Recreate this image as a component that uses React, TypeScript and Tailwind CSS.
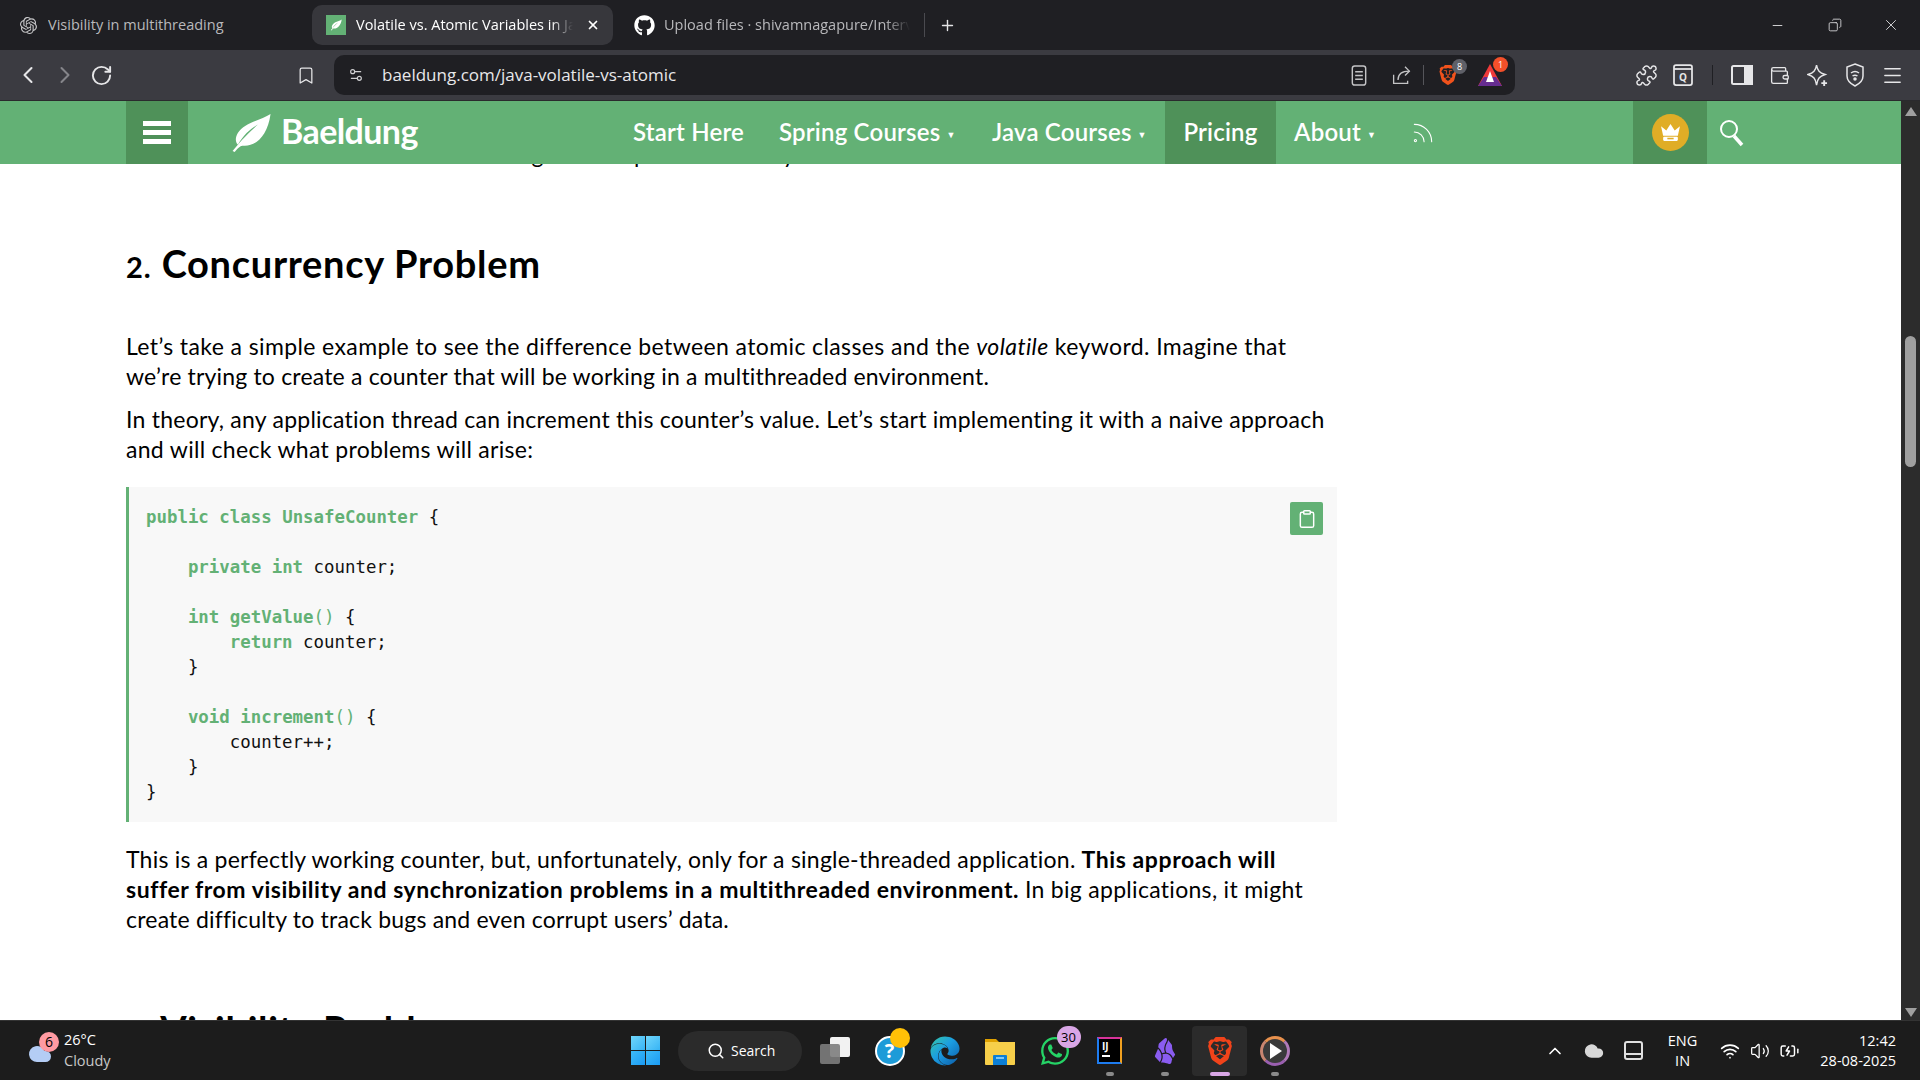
import type { ReactNode } from 'react'
import {
  ChevronLeft,
  ChevronRight,
  RotateCw,
  Bookmark,
  Settings2,
  X,
  Plus,
  Minus,
  Copy,
  Puzzle,
  Wallet,
  Menu,
  Rss,
  Search,
  Clipboard,
  ChevronUp,
  Wifi,
  Volume2,
  BatteryCharging,
  Cloud,
} from 'lucide-react'
import { FaEdge, FaGithub, FaWhatsapp } from 'react-icons/fa'
import { SiOpenai, SiBrave, SiObsidian } from 'react-icons/si'

const chromeFont = "font-['Open_Sans',sans-serif]"

const Leaf = ({ className }: { className?: string }) => (
  <svg viewBox="0 0 40 36" className={className} fill="currentColor">
    <path d="M39 0C30 6 14 8 8 18C5 23 6 27 8 29C14 19 20 14 27 10C20 16 12 24 3 35L5 36C9 31 11 30 13 30C24 31 36 22 39 0Z" />
  </svg>
)

const Crown = () => (
  <svg viewBox="0 0 20 18" className="w-[21px] h-[19px]" fill="#fff">
    <path d="M10 1L14 7L19 3L17 12H3L1 3L6 7Z" />
    <rect x="3" y="13" width="14" height="4" rx="1" />
    <rect x="7" y="14" width="6" height="1.5" fill="#e0ad26" />
  </svg>
)

const NavSearchIcon = () => (
  <svg viewBox="0 0 26 28" className="w-[26px] h-[28px] ml-[12px]" fill="none" stroke="currentColor">
    <circle cx="10" cy="10" r="8" strokeWidth="2" />
    <path d="M15 17l8 9" strokeWidth="3.5" />
  </svg>
)

const ReaderIcon = () => (
  <svg viewBox="0 0 16 22" className="w-[16px] h-[21px] ml-auto text-[#c4c4c6]" fill="none" stroke="currentColor" strokeWidth="1.5">
    <rect x="1" y="1" width="14" height="20" rx="2.5" />
    <path d="M4 7h8M4 11h8M4 15h8" />
  </svg>
)

const ShareIcon = () => (
  <svg viewBox="0 0 24 24" className="w-[21px] h-[21px] ml-[24px] text-[#c4c4c6]" fill="none" stroke="currentColor" strokeWidth="1.5">
    <path d="M3 11v10h16v-3" />
    <path d="M8 17c0-6 4-10 13-10" />
    <path d="M16 2l5 5-5 5" />
  </svg>
)

const ReadingListIcon = () => (
  <svg viewBox="0 0 20 22" className="w-[20px] h-[22px] ml-[15px]" fill="none" stroke="currentColor" strokeWidth="1.75">
    <rect x="1" y="1" width="18" height="20" rx="2" />
    <path d="M1 5h18" />
    <text x="10" y="17" textAnchor="middle" fontSize="10" fontWeight="700" fill="currentColor" stroke="none">Q</text>
  </svg>
)

const SidebarIcon = () => (
  <svg viewBox="0 0 22 22" className="w-[22px] h-[22px] ml-[18px]" fill="none" stroke="currentColor" strokeWidth="2">
    <rect x="1" y="2" width="20" height="18" rx="1.5" />
    <rect x="14" y="2" width="7" height="18" fill="currentColor" />
  </svg>
)

const LeoIcon = () => (
  <svg viewBox="0 0 22 24" className="w-[21px] h-[23px] ml-[17px]" fill="none" stroke="currentColor" strokeWidth="1.5">
    <path d="M10 1C11 7 13 9 19 11C13 13 11 15 10 22C9 15 7 13 1 11C7 9 9 7 10 1Z" />
    <path d="M18 17v6M15 20h6" strokeWidth="2" />
  </svg>
)

const VpnIcon = () => (
  <svg viewBox="0 0 20 24" className="w-[20px] h-[24px] ml-[17px]" fill="none" stroke="currentColor" strokeWidth="1.5">
    <path d="M10 1l8 3v9c0 5-4 8-8 10-4-2-8-5-8-10V4z" />
    <path d="M6 10c2.500-2 5.500-2 8 0M7.500 13c1.500-1 3.500-1 5 0" />
    <circle cx="10" cy="16" r="1" fill="currentColor" />
  </svg>
)

const WindowsLogo = () => (
  <div className="grid grid-cols-2 gap-[1px] w-[29px] h-[29px]">
    <div className="bg-gradient-to-br from-[#6fd6fb] to-[#35b4f5]" />
    <div className="bg-gradient-to-br from-[#6fd6fb] to-[#35b4f5]" />
    <div className="bg-gradient-to-br from-[#3dbbf8] to-[#1a9bf3]" />
    <div className="bg-gradient-to-br from-[#3dbbf8] to-[#1a9bf3]" />
  </div>
)

const Folder = () => (
  <svg viewBox="0 0 30 30" className="w-[30px] h-[30px]">
    <path d="M0 3h11l3 3h-14z" fill="#e0a100" />
    <path d="M0 6h30v22a1 1 0 0 1-1 1H1a1 1 0 0 1-1-1z" fill="#f7cf4a" />
    <path d="M9 19h12a1 1 0 0 1 1 1v9H8v-9a1 1 0 0 1 1-1z" fill="#0c7fd6" />
    <rect x="11" y="21" width="8" height="2" fill="#7fc8f5" />
  </svg>
)

const TabTitle = ({ children, active }: { children: ReactNode; active?: boolean }) => (
  <span className={`text-[14.5px] whitespace-nowrap overflow-hidden ${active ? 'text-white' : 'text-[#b9b9bc]'}`}>
    {children}
  </span>
)

const TabStrip = () => (
  <div className={`h-[50px] bg-[#1f1f23] flex items-center ${chromeFont}`}>
    <div className="w-[312px] flex items-center pl-[20px] gap-[11px]">
      <SiOpenai className="w-[17px] h-[17px] text-[#c8c8ca]" />
      <TabTitle>Visibility in multithreading</TabTitle>
    </div>
    <div className="w-[301px] h-[40px] bg-[#37373c] rounded-[10px] flex items-center pl-[14px] pr-[13px] gap-[10px]">
      <div className="w-[20px] h-[20px] bg-[#63b175] flex items-center justify-center shrink-0">
        <Leaf className="w-[12px] h-[12px] text-white" />
      </div>
      <TabTitle active>
        <span className="inline-block w-[217px] overflow-hidden align-bottom [mask-image:linear-gradient(to_right,black_90%,transparent)]">
          Volatile vs. Atomic Variables in Java
        </span>
      </TabTitle>
      <X className="w-[14px] h-[14px] text-white ml-auto shrink-0" strokeWidth={3} />
    </div>
    <div className="flex items-center pl-[21px] gap-[9px]">
      <FaGithub className="w-[21px] h-[21px] text-white" />
      <TabTitle>
        <span className="inline-block w-[246px] overflow-hidden align-bottom [mask-image:linear-gradient(to_right,black_90%,transparent)]">
          Upload files · shivamnagapure/Interview
        </span>
      </TabTitle>
    </div>
    <div className="w-px h-[24px] bg-[#4a4a4f] ml-[14px]" />
    <Plus className="w-[17px] h-[17px] text-[#e4e4e6] ml-[14px]" strokeWidth={2} />
    <div className="ml-auto flex items-center text-[#d8d8da]">
      <Minus className="w-[15px] h-[15px] mr-[43px]" strokeWidth={1.5} />
      <Copy className="w-[14px] h-[14px] mr-[40px] -scale-x-100" strokeWidth={1.5} />
      <X className="w-[18px] h-[18px] mr-[20px]" strokeWidth={1.25} />
    </div>
  </div>
)

const Toolbar = () => (
  <div className={`h-[51px] bg-[#3b3b41] border-b border-[#2a2a2d] flex items-center text-[#e6e6e8] ${chromeFont}`}>
    <ChevronLeft className="w-[28px] h-[28px] ml-[14px]" strokeWidth={1.75} />
    <ChevronRight className="w-[28px] h-[28px] ml-[9px] text-[#85858a]" strokeWidth={1.75} />
    <RotateCw className="w-[23px] h-[23px] ml-[11px]" strokeWidth={2} />
    <Bookmark className="w-[20px] h-[23px] ml-[183px]" strokeWidth={1.5} />
    <div className="w-[1181px] h-[40px] ml-[18px] bg-[#1f1f23] rounded-[10px] flex items-center">
      <Settings2 className="w-[16px] h-[16px] ml-[14px] text-[#d0d0d2]" strokeWidth={1.75} />
      <span className="ml-[18px] text-[17px] text-[#e8e8ea]">baeldung.com/java-volatile-vs-atomic</span>
      <ReaderIcon />
      <ShareIcon />
      <div className="w-px h-[20px] bg-[#55555a] ml-[11px]" />
      <div className="relative ml-[14px]">
        <SiBrave className="w-[20px] h-[24px] text-[#f1521c]" />
        <span className="absolute -top-[4px] -right-[9px] w-[15px] h-[15px] rounded-full bg-[#5f6068] text-[9px] leading-[15px] text-center text-white">
          8
        </span>
      </div>
      <div className="relative ml-[20px] mr-[13px]">
        <svg viewBox="0 0 24 22" className="w-[24px] h-[22px]">
          <path d="M12 0L24 22H0z" fill="#ef3a3a" />
          <path d="M0 22L6 13H18L24 22z" fill="#662d91" />
          <path d="M12 7L16 18H8z" fill="#fff" />
        </svg>
        <span className="absolute -top-[7px] -right-[6px] w-[15px] h-[15px] rounded-full bg-[#f4502a] text-[9px] leading-[15px] text-center text-white">
          1
        </span>
      </div>
    </div>
    <Puzzle className="w-[23px] h-[23px] ml-[120px]" strokeWidth={1.5} />
    <ReadingListIcon />
    <div className="w-px h-[20px] bg-[#1f1f23] ml-[19px]" />
    <SidebarIcon />
    <Wallet className="w-[21px] h-[21px] ml-[16px]" strokeWidth={1.5} />
    <LeoIcon />
    <VpnIcon />
    <Menu className="w-[23px] h-[23px] ml-[16px]" strokeWidth={1.5} />
  </div>
)

const NavLink = ({ children, caret, className }: { children: ReactNode; caret?: boolean; className?: string }) => (
  <span className={`flex items-center whitespace-nowrap text-[24px] font-semibold tracking-[0.2px] mb-[2px] ${className ?? ''}`}>
    {children}
    {caret && <span className="text-[9px] ml-[6px] mt-[6px]">▼</span>}
  </span>
)

const NavBar = () => (
  <div className="h-[63px] bg-[#63b175] flex items-center text-white font-['Lato',sans-serif] shrink-0">
    <div className="w-[62px] h-full bg-[#4f9159] ml-[126px] flex flex-col items-center justify-center gap-[4px]">
      <div className="w-[28px] h-[5px] bg-white" />
      <div className="w-[28px] h-[5px] bg-white" />
      <div className="w-[28px] h-[5px] bg-white" />
    </div>
    <Leaf className="w-[43px] h-[38px] ml-[41px]" />
    <span className="ml-[9px] mb-[4px] text-[34px] font-bold tracking-[-0.6px] w-[143px]">Baeldung</span>
    <NavLink className="ml-[209px] w-[146px]">Start Here</NavLink>
    <NavLink caret className="w-[213px]">Spring Courses</NavLink>
    <NavLink caret className="w-[173px]">Java Courses</NavLink>
    <div className="w-[111px] h-full bg-[#4f9159] flex items-center justify-center">
      <NavLink>Pricing</NavLink>
    </div>
    <NavLink caret className="ml-[18px] w-[116px]">About</NavLink>
    <Rss className="w-[26px] h-[26px]" strokeWidth={1} />
    <div className="w-[74px] h-full bg-[#4f9159] ml-[197px] flex items-center justify-center">
      <div className="w-[37px] h-[37px] rounded-full bg-[#e0ad26] flex items-center justify-center">
        <Crown />
      </div>
    </div>
    <NavSearchIcon />
  </div>
)

const Kw = ({ children }: { children: ReactNode }) => <span className="text-[#63b175] font-bold">{children}</span>
const Fn = ({ children }: { children: ReactNode }) => <span className="text-[#63b175]">{children}</span>

const codeLines: ReactNode[] = [
  <><Kw>public</Kw> <Kw>class</Kw> <Kw>UnsafeCounter</Kw> {'{'}</>,
  '',
  <>    <Kw>private</Kw> <Kw>int</Kw> counter;</>,
  '',
  <>    <Kw>int</Kw> <Kw>getValue</Kw><Fn>()</Fn> {'{'}</>,
  <>        <Kw>return</Kw> counter;</>,
  '    }',
  '',
  <>    <Kw>void</Kw> <Kw>increment</Kw><Fn>()</Fn> {'{'}</>,
  '        counter++;',
  '    }',
  '}',
]

const CodeBlock = () => (
  <div className="relative mt-[23px] w-[1211px] h-[335px] bg-[#f8f8f8] border-l-[3px] border-[#63b175] pl-[17px] pt-[18px]">
    <pre className="font-['DejaVu_Sans_Mono',monospace] text-[17.4px] leading-[25px] text-[#111]">
      {codeLines.map((line, i) => (
        <div key={i} className="h-[25px]">
          {line}
        </div>
      ))}
    </pre>
    <button className="absolute top-[15px] right-[14px] w-[33px] h-[33px] bg-[#63b175] rounded-[2px] flex items-center justify-center">
      <Clipboard className="w-[20px] h-[20px] text-white" strokeWidth={1.75} />
    </button>
  </div>
)

const Article = () => (
  <div className="flex-1 bg-white overflow-hidden pl-[126px] font-['Lato',sans-serif] text-black">
    <div className="h-[30px] -mt-[25px] text-[23px] leading-[30px] tracking-[0.3px] whitespace-nowrap">
      We will now talk about the main ideas: good and practical use by all
    </div>
    <h2 className="mt-[69px] h-[50px] text-[38px] leading-[50px] font-bold tracking-[0.7px] whitespace-nowrap">
      <span className="text-[29px] tracking-[1px]">2.</span> Concurrency Problem
    </h2>
    <div className="mt-[43px] text-[23px] leading-[30px] whitespace-nowrap">
      <p>
        <span className="tracking-[0.39px]">
          Let’s take a simple example to see the difference between atomic classes and the <em>volatile</em> keyword. Imagine that
        </span>
        <br />
        <span className="tracking-[0.18px]">we’re trying to create a counter that will be working in a multithreaded environment.</span>
      </p>
      <p className="mt-[13px]">
        <span className="tracking-[0.24px]">
          In theory, any application thread can increment this counter’s value. Let’s start implementing it with a naive approach
        </span>
        <br />
        <span className="tracking-[0.3px]">and will check what problems will arise:</span>
      </p>
    </div>
    <CodeBlock />
    <p className="mt-[22px] text-[23px] leading-[30px] whitespace-nowrap">
      <span className="tracking-[0.23px]">This is a perfectly working counter, but, unfortunately, only for a single-threaded application.</span>{' '}
      <strong className="tracking-[0.6px]">This approach will</strong>
      <br />
      <strong className="tracking-[0.54px]">suffer from visibility and synchronization problems in a multithreaded environment.</strong>{' '}
      <span className="tracking-[0.3px]">In big applications, it might</span>
      <br />
      <span className="tracking-[0.2px]">create difficulty to track bugs and even corrupt users’ data.</span>
    </p>
    <h2 className="mt-[70px] text-[38px] leading-[50px] font-bold tracking-[0.7px] whitespace-nowrap">
      <span className="text-[29px] tracking-[1px] align-[-0.25em]">3.</span> Visibility Problem
    </h2>
  </div>
)

const Scrollbar = () => (
  <div className="w-[19px] bg-[#2c2c2c] flex flex-col items-center">
    <div className="mt-[6px] w-0 h-0 border-x-[6px] border-x-transparent border-b-[9px] border-b-[#9f9f9f]" />
    <div className="mt-[220px] w-[11px] h-[131px] rounded-full bg-[#9f9f9f]" />
    <div className="mt-auto mb-[3px] w-0 h-0 border-x-[6px] border-x-transparent border-t-[9px] border-t-[#9f9f9f]" />
  </div>
)

const Slot = ({ children, dot, active }: { children: ReactNode; dot?: boolean; active?: boolean }) => (
  <div className={`relative w-[55px] h-[50px] flex items-center justify-center rounded-[4px] ${active ? 'bg-[#2b2b2b]' : ''}`}>
    {children}
    {dot && <span className="absolute bottom-[0px] left-1/2 -translate-x-1/2 w-[8px] h-[4px] rounded-full bg-[#8a8a8a]" />}
    {active && <span className="absolute bottom-[0px] left-1/2 -translate-x-1/2 w-[20px] h-[4px] rounded-full bg-[#d9a6e6]" />}
  </div>
)

const Taskbar = () => (
  <div className={`h-[60px] bg-[#1c1c1c] border-t border-[#333] flex items-center text-white shrink-0 ${chromeFont}`}>
    <div className="w-[618px] flex items-center pl-[24px]">
      <div className="relative w-[31px] h-[30px]">
        <Cloud className="absolute bottom-0 left-0 w-[32px] h-[24px] text-[#b4cdf5] fill-[#b4cdf5]" />
        <span className="absolute -top-[4px] left-[15px] w-[20px] h-[20px] rounded-full bg-[#ff9aa2] text-[14px] leading-[20px] text-center text-black">
          6
        </span>
      </div>
      <div className="ml-[9px] mb-[2px] text-[14.5px] leading-[21px]">
        <div>26°C</div>
        <div className="text-[#c8c8c8]">Cloudy</div>
      </div>
    </div>
    <Slot>
      <WindowsLogo />
    </Slot>
    <div className="ml-[5px] w-[124px] h-[40px] rounded-full bg-[#2b2b2b] flex items-center pl-[29px] gap-[6px] text-[14px]">
      <Search className="w-[18px] h-[18px]" strokeWidth={2} />
      Search
    </div>
    <div className="ml-[5px] flex items-center">
      <Slot>
        <div className="relative w-[30px] h-[27px]">
          <div className="absolute top-0 right-0 w-[20px] h-[20px] bg-[#f2f2f2] rounded-[2px]" />
          <div className="absolute bottom-0 left-0 w-[20px] h-[20px] bg-[#7d7d7d]/90 rounded-[2px]" />
        </div>
      </Slot>
      <Slot>
        <div className="relative w-[30px] h-[30px] rounded-full bg-[#1d9bd8] border-[2px] border-white flex items-center justify-center text-[20px] font-bold">
          ?
          <span className="absolute -top-[10px] -right-[7px] w-[20px] h-[20px] rounded-full bg-[#ffc107]" />
        </div>
      </Slot>
      <Slot>
        <svg width="0" height="0" className="absolute">
          <defs>
            <linearGradient id="edgeGrad" x1="0" y1="0" x2="1" y2="1">
              <stop offset="0" stopColor="#37c9a5" />
              <stop offset="0.45" stopColor="#1b9de2" />
              <stop offset="1" stopColor="#0c59a4" />
            </linearGradient>
          </defs>
        </svg>
        <FaEdge className="w-[30px] h-[30px]" fill="url(#edgeGrad)" />
      </Slot>
      <Slot>
        <Folder />
      </Slot>
      <Slot>
        <div className="relative">
          <FaWhatsapp className="w-[32px] h-[32px] text-[#25d366]" />
          <span className="absolute -top-[9px] -right-[10px] w-[24px] h-[22px] rounded-full bg-[#d9a6e6] text-black text-[13px] leading-[22px] text-center">
            30
          </span>
        </div>
      </Slot>
      <Slot dot>
        <div className="w-[25px] h-[27px] bg-black border-[2px] border-[#1e7cf0] border-t-[#d8339a] border-r-[#f0a020] flex flex-col pl-[3px] pt-[1px]">
          <span className="text-[10px] leading-[12px] font-bold">IJ</span>
          <span className="w-[8px] h-[2px] bg-white mt-[3px]" />
        </div>
      </Slot>
      <Slot dot>
        <SiObsidian className="w-[26px] h-[30px] text-[#8a5cf0]" />
      </Slot>
      <Slot active>
        <SiBrave className="w-[28px] h-[32px] text-[#f1431a]" />
      </Slot>
      <Slot dot>
        <div className="w-[30px] h-[30px] rounded-full border-[3px] border-t-[#e8914d] border-r-[#b07ab8] border-b-[#9a5fb0] border-l-[#c98570] bg-[#3a3a3a] flex items-center justify-center">
          <div className="ml-[3px] w-0 h-0 border-y-[8px] border-y-transparent border-l-[12px] border-l-white" />
        </div>
      </Slot>
    </div>
    <div className="ml-auto flex items-center">
      <ChevronUp className="w-[20px] h-[20px]" strokeWidth={2} />
      <Cloud className="w-[22px] h-[20px] ml-[18px] text-[#d8d8d8] fill-[#d8d8d8]" />
      <div className="ml-[19px] w-[19px] h-[19px] border-[2px] border-[#e0e0e0] rounded-[3px] flex flex-col justify-end">
        <div className="h-[2px] bg-[#e0e0e0] mb-[3px]" />
      </div>
      <div className="ml-[25px] text-[14.5px] leading-[20px] text-center">
        <div>ENG</div>
        <div>IN</div>
      </div>
      <Wifi className="w-[20px] h-[20px] ml-[23px]" strokeWidth={2} />
      <Volume2 className="w-[20px] h-[20px] ml-[10px]" strokeWidth={1.5} />
      <BatteryCharging className="w-[21px] h-[20px] ml-[9px]" strokeWidth={1.75} />
      <div className="ml-[20px] mr-[24px] text-[14.5px] leading-[20px] text-right">
        <div>12:42</div>
        <div>28-08-2025</div>
      </div>
    </div>
  </div>
)

export default function App() {
  return (
    <div className="w-[1920px] h-[1080px] flex flex-col overflow-hidden">
      <TabStrip />
      <Toolbar />
      <div className="flex-1 min-h-0 flex">
        <div className="flex-1 flex flex-col min-w-0">
          <NavBar />
          <Article />
        </div>
        <Scrollbar />
      </div>
      <Taskbar />
    </div>
  )
}
